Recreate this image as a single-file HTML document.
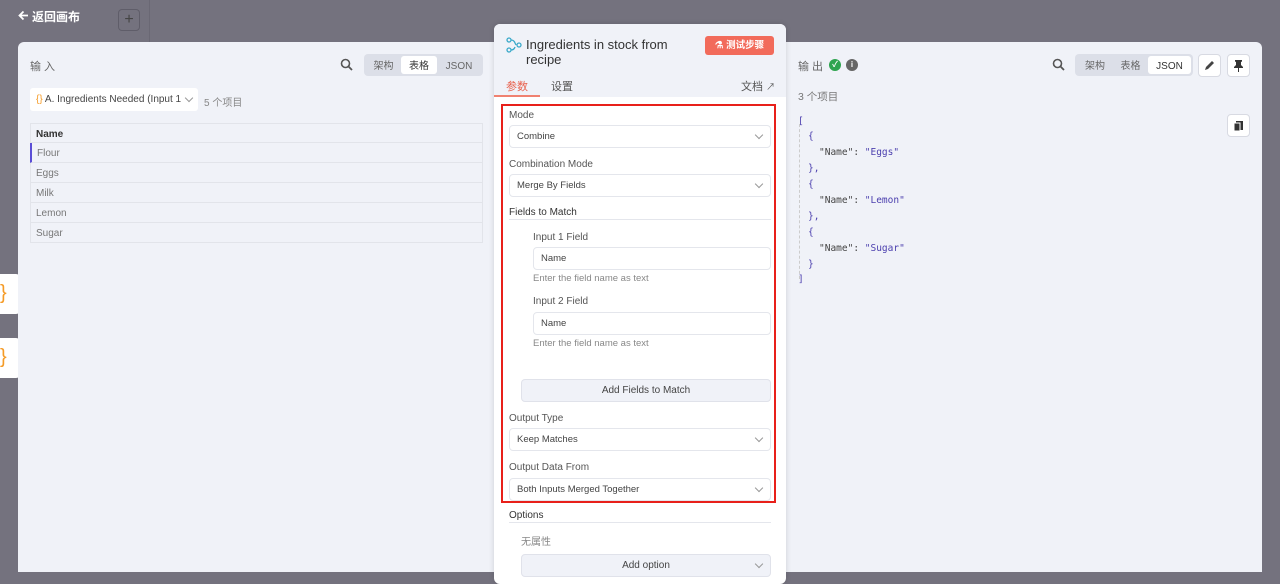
<!DOCTYPE html>
<html><head><meta charset="utf-8"><style>
*{box-sizing:border-box;margin:0;padding:0}
body{width:1280px;height:567px;overflow:hidden;background:#74727e;font-family:"Liberation Sans","Noto Sans CJK SC",sans-serif;position:relative;color:#444}
.abs{position:absolute}
.panel{background:#f0f2f8;}
.seg{position:absolute;display:flex;background:#dcdfe8;border-radius:4px;padding:2px;height:22px;font-size:10px}
.seg span{text-align:center;line-height:18px;padding-top:2px;color:#666;border-radius:3px}
.seg span.on{background:#fff;color:#333}
.row{position:absolute;left:30px;width:453px;height:20px;border:1px solid #e2e4ea;border-top:none;font-size:10px;color:#777;padding-left:5px;line-height:21px;background:#f0f2f8}
.lbl{position:absolute;font-size:10px;color:#555}
.inp{position:absolute;background:#fff;border:1px solid #e4e6ec;border-radius:4px;height:23px;font-size:9.5px;color:#444;padding-left:7px;line-height:22px}
.chev{position:absolute;right:8px;top:6px;width:6px;height:6px;border-right:1px solid #999;border-bottom:1px solid #999;transform:rotate(45deg)}
.hint{position:absolute;font-size:9.5px;color:#888}
.j{position:absolute;font-family:"DejaVu Sans Mono","Liberation Mono",monospace;font-size:9.5px;color:#444}
.s{color:#4b3fae}
.ib{position:absolute;width:23px;height:23px;background:#fff;border:1px solid #d8dae2;border-radius:4px}
</style></head><body>
<svg class="abs" style="left:18px;top:10px" width="11" height="11" viewBox="0 0 11 11"><path d="M10 5.5H2M5.5 1.5L1.5 5.5l4 4" stroke="#fff" stroke-width="1.8" fill="none"/></svg>
<div class="abs" style="left:32px;top:8px;font-size:12px;color:#fff;font-weight:bold">返回画布</div>
<div class="abs" style="left:118px;top:9px;width:22px;height:22px;border:1px solid #5f5d69;border-radius:4px;color:#444;text-align:center;line-height:20px;font-size:16px">+</div>
<div class="abs" style="left:149px;top:0;width:1px;height:42px;background:#6a6874"></div>
<div class="abs" style="left:0;top:274px;width:20px;height:40px;background:#fff;border-radius:0 4px 4px 0;color:#f59b26;font-size:20px;line-height:38px">}</div>
<div class="abs" style="left:0;top:338px;width:20px;height:40px;background:#fff;border-radius:0 4px 4px 0;color:#f59b26;font-size:20px;line-height:38px">}</div>
<div class="abs panel" style="left:18px;top:42px;width:478px;height:530px;border-radius:6px 0 0 0"></div>
<div class="abs" style="left:30px;top:58px;font-size:11px;color:#666;letter-spacing:3px">输入</div>
<svg class="abs" style="left:340px;top:58px" width="13" height="13" viewBox="0 0 13 13"><circle cx="5.5" cy="5.5" r="4" fill="none" stroke="#555" stroke-width="1.6"/><path d="M8.5 8.5L12 12" stroke="#555" stroke-width="1.8"/></svg>
<div class="seg" style="left:364px;top:54px"><span style="width:35px">架构</span><span class="on" style="width:36px">表格</span><span style="width:44px">JSON</span></div>
<div class="abs" style="left:30px;top:88px;width:168px;height:23px;background:#fff;border-radius:3px;font-size:10px;color:#444;line-height:23px;padding-left:6px"><span style="color:#f59b26">{}</span> A. Ingredients Needed (Input 1</div>
<div class="chev" style="left:186px;top:95px;right:auto"></div>
<div class="abs" style="left:204px;top:94px;font-size:10px;color:#888">5 个项目</div>
<div class="row" style="top:123px;border-top:1px solid #e2e4ea;font-weight:bold;color:#333">Name</div>
<div class="row" style="top:143px;border-left:2px solid #5b4ed6">Flour</div>
<div class="row" style="top:163px">Eggs</div>
<div class="row" style="top:183px">Milk</div>
<div class="row" style="top:203px">Lemon</div>
<div class="row" style="top:223px">Sugar</div>
<div class="abs panel" style="left:780px;top:42px;width:482px;height:530px;border-radius:0 6px 0 0"></div>
<div class="abs" style="left:798px;top:58px;font-size:11px;color:#666;letter-spacing:3px">输出</div>
<div class="abs" style="left:829px;top:59px;width:12px;height:12px;border-radius:50%;background:#2ea44f;color:#fff;font-size:8px;text-align:center;line-height:12px;font-weight:bold">✓</div>
<div class="abs" style="left:846px;top:59px;width:12px;height:12px;border-radius:50%;background:#666;color:#fff;font-size:8px;text-align:center;line-height:12px;font-weight:bold">i</div>
<svg class="abs" style="left:1052px;top:58px" width="13" height="13" viewBox="0 0 13 13"><circle cx="5.5" cy="5.5" r="4" fill="none" stroke="#555" stroke-width="1.6"/><path d="M8.5 8.5L12 12" stroke="#555" stroke-width="1.8"/></svg>
<div class="seg" style="left:1075px;top:54px"><span style="width:36px">架构</span><span style="width:35px">表格</span><span class="on" style="width:43px">JSON</span></div>
<div class="ib" style="left:1198px;top:54px"><svg width="21" height="21" viewBox="0 0 21 21"><path d="M6 15l1-3 6-6 2 2-6 6z" fill="#444"/></svg></div>
<div class="ib" style="left:1227px;top:54px"><svg width="21" height="21" viewBox="0 0 21 21"><path d="M7 5h7v1.5l-1 .5v3l2 2v1H6v-1l2-2V7l-1-.5z M10 13h1v4h-1z" fill="#333"/></svg></div>
<div class="abs" style="left:798px;top:89px;font-size:10.5px;color:#777">3 个项目</div>
<div class="ib" style="left:1227px;top:114px"><svg width="21" height="21" viewBox="0 0 21 21"><rect x="8" y="6" width="7" height="9" fill="#333"/><rect x="6" y="8" width="6" height="8" fill="#333" stroke="#fff" stroke-width="1"/></svg></div>
<div class="abs" style="left:799px;top:124px;width:1px;height:155px;border-left:1px dashed #ccc"></div>
<div class="j s" style="left:798px;top:116px">[</div>
<div class="j s" style="left:808px;top:131px">{</div>
<div class="j" style="left:819px;top:147px">"Name":  <span class="s">"Eggs"</span></div>
<div class="j s" style="left:808px;top:163px">},</div>
<div class="j s" style="left:808px;top:179px">{</div>
<div class="j" style="left:819px;top:195px">"Name":  <span class="s">"Lemon"</span></div>
<div class="j s" style="left:808px;top:211px">},</div>
<div class="j s" style="left:808px;top:227px">{</div>
<div class="j" style="left:819px;top:243px">"Name":  <span class="s">"Sugar"</span></div>
<div class="j s" style="left:808px;top:259px">}</div>
<div class="j s" style="left:798px;top:274px">]</div>
<div class="abs" style="left:494px;top:24px;width:292px;height:560px;background:#fff;border-radius:6px;box-shadow:0 0 6px rgba(0,0,0,.15);overflow:hidden">
  <div style="position:absolute;left:0;top:0;width:292px;height:73px;background:#f0f2f8"></div>
</div>
<svg class="abs" style="left:506px;top:37px" width="16" height="16" viewBox="0 0 16 16" fill="none" stroke="#3aa9c9" stroke-width="1.3"><circle cx="3" cy="3" r="2"/><circle cx="3" cy="13" r="2"/><circle cx="13" cy="8" r="2"/><path d="M5 3q3 0 4 3l1 2M5 13q3 0 4-3"/></svg>
<div class="abs" style="left:526px;top:37px;width:160px;font-size:13px;color:#333;line-height:15px">Ingredients in stock from<br>recipe</div>
<div class="abs" style="left:705px;top:36px;width:69px;height:19px;background:#f26b5b;border-radius:3px;color:#fff;font-size:9.5px;text-align:center;line-height:19px;font-weight:bold">⚗ 测试步骤</div>
<div class="abs" style="left:506px;top:78px;font-size:11px;color:#e8604c">参数</div>
<div class="abs" style="left:494px;top:95px;width:46px;height:2px;background:#f08170"></div>
<div class="abs" style="left:551px;top:78px;font-size:11px;color:#555">设置</div>
<div class="abs" style="left:741px;top:78px;font-size:11px;color:#555">文档 <span style="font-size:9px">↗</span></div>
<div class="abs" style="left:501px;top:104px;width:275px;height:399px;border:2px solid #e8201a"></div>
<div class="lbl" style="left:509px;top:110px">Mode</div>
<div class="inp" style="left:509px;top:125px;width:262px">Combine<div class="chev"></div></div>
<div class="lbl" style="left:509px;top:159px">Combination Mode</div>
<div class="inp" style="left:509px;top:174px;width:262px">Merge By Fields<div class="chev"></div></div>
<div class="lbl" style="left:509px;top:207px;color:#333">Fields to Match</div>
<div class="abs" style="left:509px;top:219px;width:262px;height:1px;background:#e4e6ec"></div>
<div class="lbl" style="left:533px;top:232px">Input 1 Field</div>
<div class="inp" style="left:533px;top:247px;width:238px">Name</div>
<div class="hint" style="left:533px;top:273px">Enter the field name as text</div>
<div class="lbl" style="left:533px;top:296px">Input 2 Field</div>
<div class="inp" style="left:533px;top:312px;width:238px">Name</div>
<div class="hint" style="left:533px;top:338px">Enter the field name as text</div>
<div class="abs" style="left:521px;top:379px;width:250px;height:23px;background:#f0f2f8;border:1px solid #e0e2ea;border-radius:4px;font-size:10px;color:#444;text-align:center;line-height:21px">Add Fields to Match</div>
<div class="lbl" style="left:509px;top:413px">Output Type</div>
<div class="inp" style="left:509px;top:428px;width:262px">Keep Matches<div class="chev"></div></div>
<div class="lbl" style="left:509px;top:462px">Output Data From</div>
<div class="inp" style="left:509px;top:478px;width:262px">Both Inputs Merged Together<div class="chev"></div></div>
<div class="lbl" style="left:509px;top:510px;color:#333">Options</div>
<div class="abs" style="left:509px;top:522px;width:262px;height:1px;background:#e4e6ec"></div>
<div class="hint" style="left:521px;top:533px;font-size:10px">无属性</div>
<div class="abs" style="left:521px;top:554px;width:250px;height:23px;background:#f0f2f8;border:1px solid #e0e2ea;border-radius:4px;font-size:10px;color:#444;text-align:center;line-height:21px">Add option<div class="chev"></div></div>
</body></html>
